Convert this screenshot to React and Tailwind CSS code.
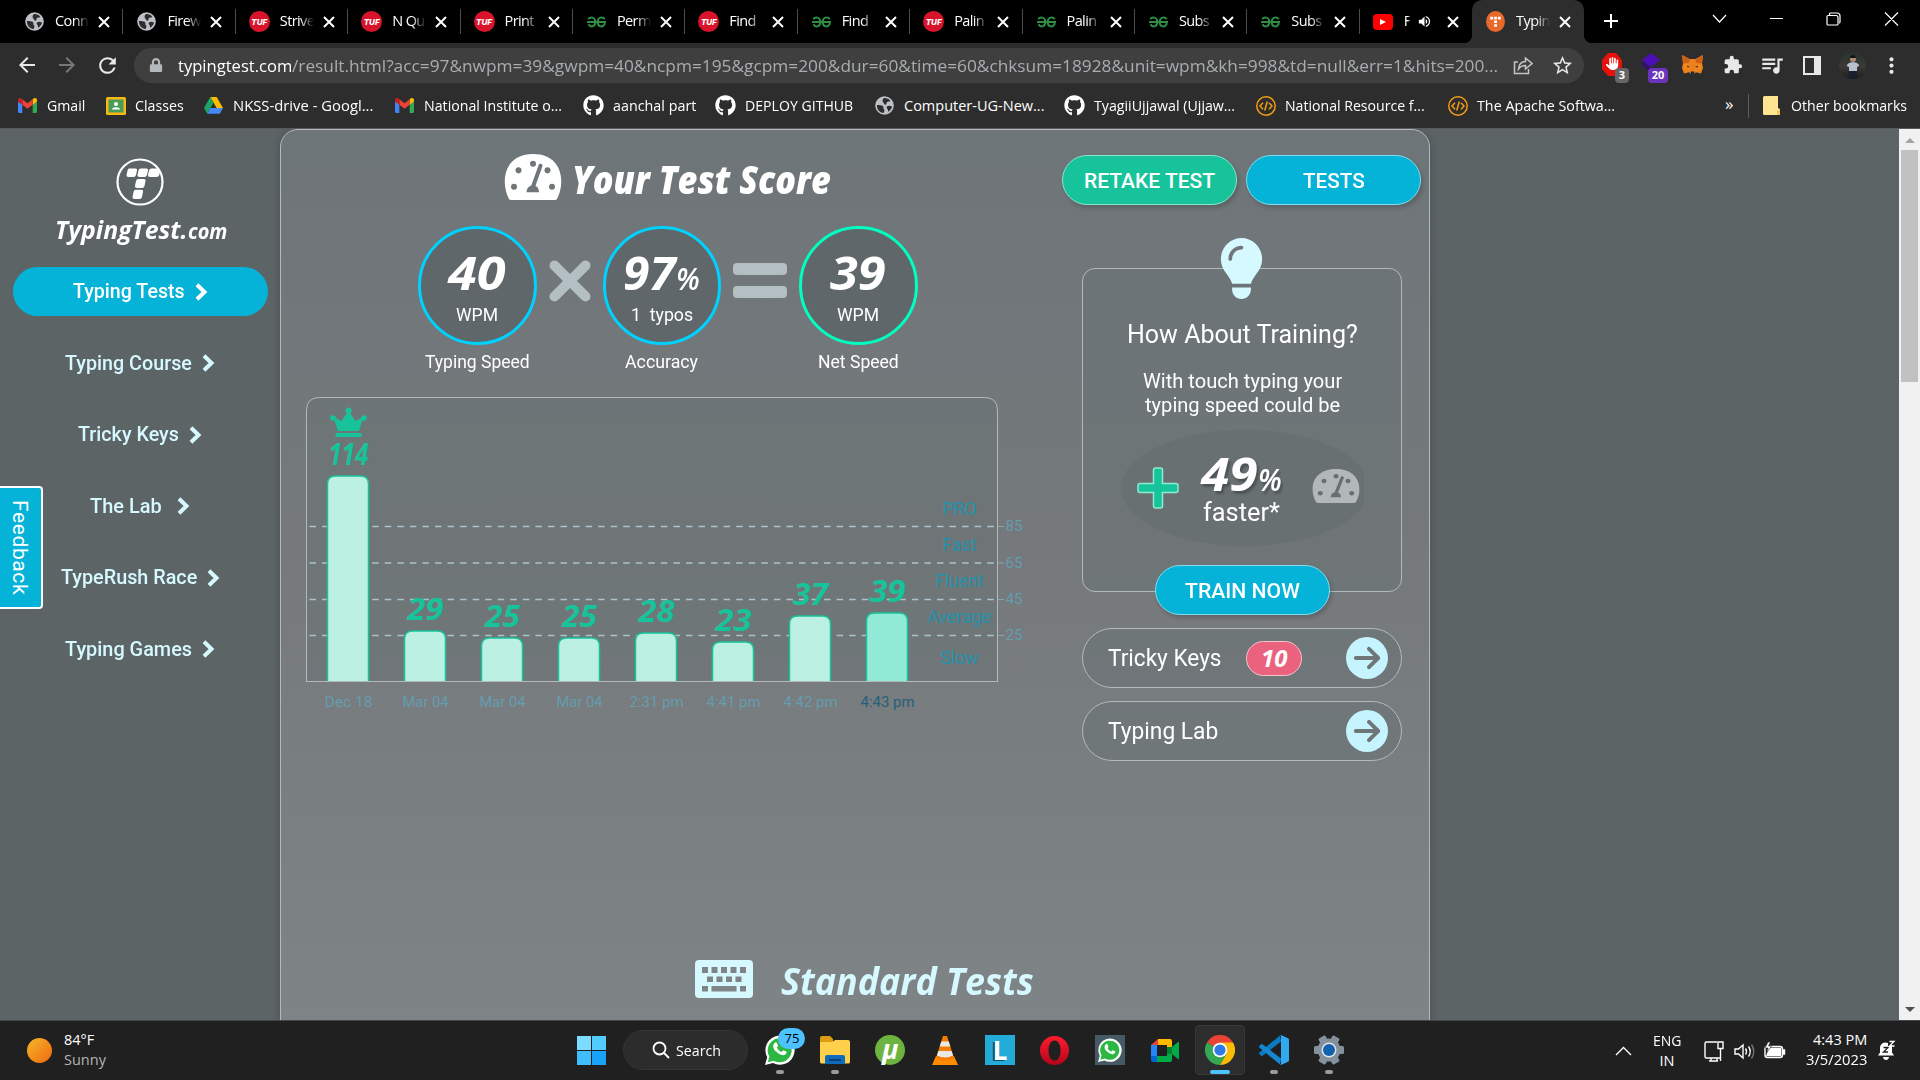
import React, { useLayoutEffect, useRef, useState } from "react";
import { FaGithub, FaLock } from "react-icons/fa";
import { FaLightbulb, FaCircleArrowRight, FaHand } from "react-icons/fa6";
import { MdStarOutline, MdRefresh, MdArrowBack, MdArrowForward, MdOutlineQueueMusic, MdMoreVert, MdVolumeUp, MdAdd } from "react-icons/md";

const ui = "font-['Open_Sans','Noto_Sans',sans-serif]";
const display = "font-['Open_Sans','Noto_Sans',sans-serif] italic";

/* A one-line label that fills exactly `w` pixels. */
function Fit({ w, className = "", children }) {
  const ref = useRef(null);
  const [style, setStyle] = useState({});
  useLayoutEffect(() => {
    setStyle({ transform: `scaleX(${w / ref.current.offsetWidth})` });
  }, [w]);
  return (
    <span className={"inline-block shrink-0 whitespace-nowrap text-left " + className} style={{ width: w }}>
      <span ref={ref} className="inline-block origin-left whitespace-pre" style={style}>{children}</span>
    </span>
  );
}

/* ---------- small brand drawings ---------- */
const Globe = () => (
  <svg width="19" height="19" viewBox="0 0 18 18">
    <circle cx="9" cy="9" r="8.800" fill="#bdc1c6" />
    <path d="M1.800 8.500c2 .2 4.500-.1 5.700 1 1.200 1-.4 1.800.8 2.700 1.200.8.600 2.300-.3 4C4.500 15.800 1.800 13 1.800 8.500zM8.500 2c2.500-.2 4.500.8 6 2.600-1.200 1.200-2 .5-3 1.200-1.200.9.200 2-1.400 2.400C8.500 8.500 8.800 7 7.800 6.200 6.800 5.400 7 3 8.500 2zM11.500 9.800c1.500-.9 3.300-.6 4.600.2-.4 2.200-1.700 4-3.700 5-.2-1.200.2-1.700-.5-2.500-.7-.7-1.300-2-.4-2.700z" fill="#2d2d2d" />
  </svg>
);
const Tuf = () => (
  <span className="flex h-[21px] w-[21px] items-center justify-center rounded-full bg-[#d8142c] font-['Inter',sans-serif] text-[8px] font-extrabold italic text-white">TUF</span>
);
const Gfg = () => (
  <svg width="19" height="12" viewBox="0 0 19 12" fill="none" stroke="#2f8d46" strokeWidth="1.900">
    <path d="M1.200 3.200C3 .6 8.300.600 8.300 6S3.200 11.500 1.400 8.200M0 6h19M17.800 3.200C16 .6 10.700.600 10.700 6s5.100 5.500 6.900 2.200V6" />
  </svg>
);
const Yt = () => <span className="flex h-4 w-5 items-center justify-center rounded bg-[#ff0000]"><span className="h-0 w-0 border-y-[3px] border-l-[6px] border-y-transparent border-l-white" /></span>;
const TtIcon = () => (
  <svg width="19" height="21" viewBox="0 0 18 20">
    <ellipse cx="9" cy="10" rx="9" ry="10" fill="#e8692c" />
    <path d="M4 5.500h2.700v2.500H4zM7.700 5.500h2.700v2.500H7.700zM11.300 5.500H14v2.500h-2.700zM7.700 9h2.700v2.500H7.700zM7.700 12.500h2.700V15H7.700z" fill="#fff" />
  </svg>
);
const Gmail = () => (
  <svg width="19" height="15" viewBox="0 0 19 15">
    <path d="M0 3v10.500C0 14.300.6 15 1.400 15H4.300V6.500z" fill="#4285f4" />
    <path d="M19 3v10.500c0 .8-.6 1.500-1.400 1.500h-2.900V6.500z" fill="#34a853" />
    <path d="M14.700 1.300v5.500L19 3.600V2.100C19 .2 17-.6 15.600.5z" fill="#fbbc04" />
    <path d="M4.300 6.800V1.300l5.200 4 5.200-4v5.500l-5.200 4z" fill="#ea4335" />
    <path d="M0 2.100v1.500l4.300 3.200V1.300L3.400.5C2-.6 0 .2 0 2.100z" fill="#c5221f" />
  </svg>
);
const Classroom = () => (
  <svg width="20" height="18" viewBox="0 0 20 18">
    <rect width="20" height="18" rx="1.500" fill="#f6b913" /><rect x="2.500" y="2.500" width="15" height="13" fill="#4a9c58" />
    <circle cx="10" cy="7" r="2" fill="#fff" /><path d="M6 12.500c0-3 8-3 8 0z" fill="#fff" />
  </svg>
);
const Drive = () => (
  <svg width="19" height="17" viewBox="0 0 19 17">
    <path d="M6.300 0h6.400L19 11h-6.400z" fill="#fbbc04" /><path d="M6.300 0 0 11l3.200 5.700L9.500 5.500z" fill="#1ea362" /><path d="M6.300 11H19l-3.200 5.700H3.200z" fill="#4688f4" />
  </svg>
);
const Hub = () => <FaGithub size={21} color="#fff" />;
const CodeIcon = () => (
  <svg width="20" height="20" viewBox="0 0 20 20" fill="none" stroke="#f29d12" strokeWidth="1.500">
    <circle cx="10" cy="10" r="9.200" /><path d="M7 6.800L4 10l3 3.200M13 6.800l3 3.200-3 3.200M11.300 5.500L8.700 14.500" />
  </svg>
);

const tabs = [
  [Globe, "Conn"], [Globe, "Firew"], [Tuf, "Strive"], [Tuf, "N Qu"], [Tuf, "Print"], [Gfg, "Perm"], [Tuf, "Find"],
  [Gfg, "Find"], [Tuf, "Palin"], [Gfg, "Palin"], [Gfg, "Subs"], [Gfg, "Subs"], [Yt, "F"], [TtIcon, "Typin"],
];

function TabStrip() {
  return (
    <div className={"flex h-[43px] bg-black pl-[11px] text-[14.500px] text-white " + ui}>
      {tabs.map(([Icon, label], i) => {
        const active = i === 13;
        return (
          <div key={i} className={"relative flex h-[43px] w-[112.400px] shrink-0 items-center pl-[13px] " + (active ? "rounded-t-[10px] bg-[#2d2d2d]" : "")}>
            {!active && i !== 12 && <span className="absolute right-0 top-[9px] h-[25px] w-px bg-[#4d4d4d]" />}
            {active && <>
              <span className="absolute -left-2 bottom-0 h-2 w-2 bg-[radial-gradient(circle_at_0_0,#000_8px,#2d2d2d_8px)]" />
              <span className="absolute -right-2 bottom-0 h-2 w-2 bg-[radial-gradient(circle_at_100%_0,#000_8px,#2d2d2d_8px)]" />
            </>}
            <span className="flex w-[21px] justify-center"><Icon /></span>
            <span className={"ml-[10px] -mt-0.5 overflow-hidden whitespace-nowrap tracking-[-0.600px] [mask-image:linear-gradient(90deg,#000_55%,transparent_95%)] " + (i === 12 ? "w-[7px]" : "w-[36px]")}>{label}</span>
            {i === 12 && <MdVolumeUp size={15} className="ml-[6px] mr-2" />}
            <svg className="ml-[7px]" width="12" height="12" viewBox="0 0 12 12" stroke="#fff" strokeWidth="2"><path d="M1 1l10 10M11 1L1 11" /></svg>
          </div>
        );
      })}
      <MdAdd size={24} className="ml-[15px] mt-[9px]" />
      <div className="ml-[89px] flex items-start pt-[11px]">
        <svg width="190" height="16" viewBox="0 0 190 16" fill="none" stroke="#fff" strokeWidth="1.200">
          <path d="M1 4l6.500 7L14 4M58 7.500h13M116 4.500h8a2 2 0 0 1 2 2V13a1 1 0 0 1-1 1h-9a1 1 0 0 1-1-1V5.500a1 1 0 0 1 1-1zM117.500 4.500V3a1 1 0 0 1 1-1h6.500a3 3 0 0 1 3 3v6a1 1 0 0 1-1 1M173 1.500l13 13M186 1.500l-13 13" />
        </svg>
      </div>
    </div>
  );
}

function Toolbar() {
  return (
    <div className={"flex h-[44px] items-center bg-[#2d2d2d] text-[#e8e8e8] " + ui}>
      <MdArrowBack size={24} className="ml-[15px]" />
      <MdArrowForward size={24} className="ml-4 text-[#777]" />
      <MdRefresh size={25} className="ml-4" />
      <div className="ml-[14px] flex h-[35px] w-[1450px] items-center rounded-full bg-[#3f3f3f] text-[17px]">
        <FaLock size={14} className="ml-[15px] mr-[1px] text-[#b5b8bb]" />
        <Fit w={114} className="ml-[14px] pt-px text-white">typingtest.com</Fit>
        <Fit w={1206} className="pt-px text-[#aaadb0]">/result.html?acc=97&amp;nwpm=39&amp;gwpm=40&amp;ncpm=195&amp;gcpm=200&amp;dur=60&amp;time=60&amp;chksum=18928&amp;unit=wpm&amp;kh=998&amp;td=null&amp;err=1&amp;hits=200...</Fit>
        <svg className="ml-[15px]" width="20" height="20" viewBox="0 0 20 20" fill="none" stroke="#c5c5c5" strokeWidth="1.500">
          <path d="M5 7H1.500v11.500h14V14M5.500 14C6 9 9 6.500 12.500 6.500V3l6.500 5.500-6.500 5.500v-3.500c-3 0-5 .8-7 3.500z" />
        </svg>
        <MdStarOutline size={23} className="ml-[18px]" />
      </div>
      <div className="relative ml-[18px] flex h-6 w-[27px]">
        <svg width="20" height="23" viewBox="0 0 20 20" preserveAspectRatio="none"><path d="M6 0h8l6 6v8l-6 6H6l-6-6V6z" fill="#e8100c" /></svg>
        <FaHand size={13} className="absolute left-[4px] top-[4px] text-white" />
        <span className="absolute left-[13px] top-[15px] flex h-[15px] w-[14px] items-center justify-center rounded-sm bg-[#666] text-[11px] font-bold text-white">3</span>
      </div>
      <div className="relative ml-[12px] flex h-6 w-[28px]">
        <svg width="20" height="20" viewBox="0 0 20 20"><path d="M10 0l9 7-9 7-9-7z" fill="#4b0fb5" /><path d="M0 11l3-2 7 6v5z" fill="#341075" /></svg>
        <span className="absolute left-[7px] top-[15px] flex h-[15px] w-[20px] items-center justify-center rounded-sm bg-[#6b34bd] text-[11px] font-bold text-white">20</span>
      </div>
      <svg className="ml-[13px]" width="21" height="20" viewBox="0 0 21 20">
        <path d="M0 0l7.500 4h6L21 0l-1 8 1 5-2 5.500-5-1.200L12 19H9l-2-1.700-5 1.200L0 13l1-5z" fill="#e8821e" />
        <path d="M1 8h6l1.500 9L2 13zM20 8h-6l-1.500 9 6.500-4z" fill="#f6851b" /><path d="M5 10.500l3 1.500-2.500.5zM16 10.500L13 12l2.500.5zM8.500 16.500h4L12 19H9z" fill="#222b38" />
        <path d="M0 0l7.500 4-.5 4-6 .5zM21 0l-7.500 4 .5 4 6 .5z" fill="#cd6116" />
      </svg>
      <svg className="ml-[20px]" width="20" height="20" viewBox="0 0 24 24" fill="#e8e8e8">
        <path d="M20.500 11H19V7c0-1.100-.9-2-2-2h-4V3.500a2.500 2.500 0 0 0-5 0V5H4c-1.100 0-2 .9-2 2v3.800h1.500a2.700 2.700 0 0 1 0 5.400H2V20c0 1.100.9 2 2 2h3.800v-1.500a2.700 2.700 0 0 1 5.400 0V22H17c1.100 0 2-.9 2-2v-4h1.500a2.500 2.500 0 0 0 0-5z" />
      </svg>
      <MdOutlineQueueMusic size={26} className="ml-[16px]" />
      <span className="ml-[18px] h-[19px] w-[18px] border-2 border-r-[7px] border-[#e8e8e8]" />
      <span className="ml-[18px] flex h-[27px] w-[27px] items-end justify-center overflow-hidden rounded-full bg-[linear-gradient(#28332a,#3b3a38_55%,#1d1b1b)]">
        <svg width="18" height="25" viewBox="0 0 18 25"><circle cx="9" cy="5" r="3" fill="#b08a74" /><path d="M6 4a3 3 0 0 1 6 0z" fill="#151515" /><path d="M3 12c0-5 12-5 12 0l-2 1v4H5v-4z" fill="#b9c2cc" /><path d="M5 17h8l1 8H4z" fill="#17202e" /></svg>
      </span>
      <MdMoreVert size={25} className="ml-[13px]" />
    </div>
  );
}

const bookmarks = [
  [Gmail, "Gmail", 38, 88], [Classroom, "Classes", 49, 98], [Drive, "NKSS-drive - Googl...", 140, 191],
  [Gmail, "National Institute o...", 138, 189], [Hub, "aanchal part", 83, 132], [Hub, "DEPLOY GITHUB", 108, 159],
  [Globe, "Computer-UG-New...", 140, 190], [Hub, "TyagiiUjjawal (Ujjaw...", 141, 191], [CodeIcon, "National Resource f...", 140, 192],
  [CodeIcon, "The Apache Softwa...", 138, 278],
];
function Bookmarks() {
  return (
    <div className={"flex h-[42px] items-center border-b border-[#5a5a5c] bg-[#2d2d2d] pb-[4px] pl-[17px] text-[14.500px] text-white " + ui}>
      {bookmarks.map(([Icon, label, w, pitch], i) => (
        <div key={i} className="flex shrink-0 items-center" style={{ width: pitch }}>
          <span className="mr-[9px] flex w-[21px] justify-center"><Icon /></span>
          <Fit w={w}>{label}</Fit>
        </div>
      ))}
      <span className="w-[20px] pb-1 text-[17px]">»</span>
      <span className="ml-[3px] h-6 w-px bg-[#5c5c5c]" />
      <svg className="ml-[14px] mr-[11px]" width="17" height="19" viewBox="0 0 17 19"><path d="M0 1.500Q0 0 1.500 0H15v12l2 1v6H1.500Q0 19 0 17.500z" fill="#ffe591" /><path d="M14 19v-4l3-2v6z" fill="#f0c85a" /></svg>
      <Fit w={116}>Other bookmarks</Fit>
    </div>
  );
}

/* ---------- site drawings ---------- */
const Gauge = ({ w, h, color }) => (
  <svg width={w} height={h} viewBox="0 0 58 45" preserveAspectRatio="none" className="shrink-0">
    <mask id={"g" + w}>
      <rect width="58" height="45" fill="#fff" />
      {[[10, 32], [14.500, 16], [29, 9.500], [43.500, 16], [48, 32]].map(([x, y]) => <circle key={x} cx={x} cy={y} r="3" />)}
      <path d="M36.500 11.500L29 32" stroke="#000" strokeWidth="4" strokeLinecap="round" />
      <path d="M22.500 37.500c0-4 3-7 6.500-7s6 3 6 7z" />
    </mask>
    <path mask={`url(#g${w})`} d="M5 44C-4 27 0 0 29 0s33 27 24 44q-.5 1-2 1H7q-1.500 0-2-1z" fill={color} />
  </svg>
);

const navItems = [
  ["Typing Tests", 112, 10], ["Typing Course", 127, 10], ["Tricky Keys", 101, 10],
  ["The Lab", 72, 15], ["TypeRush Race", 136, 10], ["Typing Games", 127, 10],
];
const Chevron = ({ ml }) => (
  <svg width="13" height="18" viewBox="0 0 13 18" fill="none" stroke="currentColor" strokeWidth="4" style={{ marginLeft: ml }}><path d="M2 1.800l7.500 7.200L2 16.200" /></svg>
);
function Sidebar() {
  return (
    <aside className="relative flex w-[280px] shrink-0 flex-col items-center pt-[29px]">
      <svg width="48" height="48" viewBox="0 0 48 48" className="-ml-px">
        <circle cx="24" cy="24" r="22.500" fill="none" stroke="#fff" strokeWidth="2.200" />
        <g fill="#fff">
          <path d="M13 10.500h6.500q2 0 1.500 2l-1 4.500q-.5 2-2.500 2h-5q-2.300 0-2-2l1-4.500q.4-2 1.500-2zM24.500 10.500h6q2 0 1.500 2l-1 4.500q-.5 2-2.500 2h-5q-2.300 0-2-2l1-4.500q.4-2 2-2zM35.500 10.500h6q2 1.500 2.300 3.500 0 5-3.500 5H34q-2.300 0-2-2l1-4.500q.4-2 2.500-2zM22.500 21h5q2.500 0 2 2l-1 5q-.5 2-2.500 2h-5q-2.300 0-2-2l1-5q.4-2 2.500-2zM20 31.800h5q2.500 0 2 2L26 39q-.5 2-2.500 2h-5q-2.300 0-2-2l1-5q.4-2.200 2.500-2.200z" />
        </g>
      </svg>
      <div className={"mt-[3px] flex h-[42px] items-center pl-px font-bold text-white " + display}>
        <Fit w={133} className="text-[25px]">TypingTest.</Fit>
        <Fit w={39} className="mt-1 text-[21px]">com</Fit>
      </div>
      <nav className="mt-[16px] flex flex-col gap-[23px] font-['Roboto',sans-serif] text-[20.500px] font-medium">
        {navItems.map(([label, w, ml], i) => (
          <div key={label} className={"flex h-[48.500px] w-[255px] items-center justify-center rounded-full pt-px " + (i === 0 ? "bg-[#05b3d9] text-white" : "text-[#d6f8ff]")}>
            <Fit w={w}>{label}</Fit><Chevron ml={ml} />
          </div>
        ))}
      </nav>
      <div className="absolute left-0 top-[357px] flex h-[123px] w-[43px] items-center justify-center rounded-r border-2 border-l-0 border-white bg-[#05b3d9] font-['Roboto',sans-serif] text-[21px] text-white">
        <span className="pr-0.5 leading-none tracking-[0.600px] [writing-mode:vertical-rl]">Feedback</span>
      </div>
    </aside>
  );
}

function Score({ ring, value, vw, pct, unit, uw, label, lw }) {
  return (
    <div className="flex w-[118.500px] flex-col items-center font-['Roboto',sans-serif] text-[18px] text-white">
      <div className={"flex h-[119px] w-[118.500px] flex-col items-center rounded-full border-[3px] bg-[#5f676a] pt-[17px] " + ring}>
        <div className={"flex h-[52px] items-baseline text-[46px] font-bold leading-[52px] " + display}>
          <Fit w={vw}>{value}</Fit>
          {pct && <Fit w={24} className="text-[30px] font-semibold">%</Fit>}
        </div>
        <Fit w={uw} className="mt-[5px] leading-[24px]">{unit}</Fit>
      </div>
      <Fit w={lw} className="mt-[5px] leading-[24px]">{label}</Fit>
    </div>
  );
}

const bars = [
  [114, 475, "Dec 18", 40, 48], [29, 630, "Mar 04", 36, 46], [25, 637, "Mar 04", 35, 46], [25, 637, "Mar 04", 35, 46],
  [28, 632, "2:31 pm", 36, 54], [23, 641, "4:41 pm", 36, 54], [37, 615, "4:42 pm", 35, 54], [39, 612, "4:43 pm", 36, 54],
];
function Chart() {
  return (
    <svg className="ml-[24px] mt-[22px] block" width="725" height="322" viewBox="305 396 725 322">
      <path d="M306.500 682V410.500q0-13 13-13H984.500q13 0 13 13V682" fill="#6b7374" fillOpacity=".6" stroke="#b4b9ba" />
      {[[85, 526.500], [65, 563], [45, 599.500], [25, 635.500]].map(([n, y]) => (
        <g key={n}>
          <path d={`M309.500 ${y}H997`} stroke="#aac3cc" strokeWidth="1.600" strokeDasharray="6.500 6.050" />
          <path d={`M998 ${y}h6`} stroke="#8ba5ae" />
          <text x="1005.500" y={y + 4.500} textLength="17" lengthAdjust="spacingAndGlyphs" className="font-['Roboto',sans-serif] text-[15px]" fill="#659cae">{n}</text>
        </g>
      ))}
      {[["PRO", 515, 34], ["Fast", 551, 34], ["Fluent", 587, 48], ["Average", 623, 64], ["Slow", 664, 38]].map(([t, y, w]) => (
        <text key={t} x={959.500 - w / 2} y={y} textLength={w} lengthAdjust="spacingAndGlyphs" className="font-['Roboto',sans-serif] text-[18px]" fill="#2491ab">{t}</text>
      ))}
      {bars.map(([v, top, date, vw, dw], i) => {
        const x = 327 + i * 77;
        const now = i === 7;
        return (
          <g key={i}>
            <path d={`M${x + 0.500} 682V${top + 9}q0-8 8-8h25q8 0 8 8V682`} fill={now ? "#90ead6" : "#bbf0e3"} stroke="#17c39a" strokeWidth="1.500" />
            <text x={x + 21.500 - vw / 2} y={top - 10} textLength={vw} lengthAdjust="spacingAndGlyphs" className="font-['Open_Sans',sans-serif] text-[30px] font-bold italic" fill="#17c39a">{v}</text>
            <text x={x + 21.500 - dw / 2} y="707" textLength={dw} lengthAdjust="spacingAndGlyphs" className="font-['Roboto',sans-serif] text-[15px]" fill={now ? "#24607a" : "#659cae"}>{date}</text>
          </g>
        );
      })}
      <path d="M306 681.500h692" stroke="#b4b9ba" />
      <g fill="#17c39a">
        <circle cx="348.500" cy="410.500" r="3" /><circle cx="333" cy="418" r="2.800" /><circle cx="364" cy="418" r="2.800" />
        <path d="M348.500 411l7 10 8-4-4.500 14h-21L333.500 417l8 4z" /><rect x="335.500" y="433" width="26" height="4" rx="1" />
      </g>
    </svg>
  );
}

const pill = "flex h-[50px] w-[175px] items-center justify-center rounded-full border font-['Roboto',sans-serif] text-[21px] font-medium text-white shadow-[2px_3px_4px_rgba(0,0,0,0.180)] ";

function TrainRow({ label, w, badge }) {
  return (
    <div className="flex h-[60px] w-[320px] items-center rounded-full border border-[#b4b9ba] bg-[#6b7374]/60 pl-[25px] pr-[13px] font-['Roboto',sans-serif] text-[24px] text-white">
      <Fit w={w}>{label}</Fit>
      {badge && <span className={"ml-[24px] flex h-[35px] w-[56px] items-center justify-center rounded-full border border-[#f2c4ce] bg-[#ea627e] text-[24px] font-bold " + display}><Fit w={26}>{badge}</Fit></span>}
      <FaCircleArrowRight size={42} className="ml-auto text-[#c5f4ff]" />
    </div>
  );
}

function RightColumn() {
  return (
    <div className="flex w-[366px] flex-col pt-[25px]">
      <div className="flex gap-[9px]">
        <div className={pill + "border-[#8be4cf] bg-[#17c39a]"}><Fit w={131} className="pt-[3px]">RETAKE TEST</Fit></div>
        <div className={pill + "border-[#82dcee] bg-[#05b3d9]"}><Fit w={62} className="pt-[3px]">TESTS</Fit></div>
      </div>
      <div className="ml-[20px] mt-[63px] flex h-[324px] w-[320px] flex-col items-center rounded-[13px] border border-[#b4b9ba] bg-[#6b7374]/60 font-['Roboto',sans-serif] text-white">
        <FaLightbulb size={61} preserveAspectRatio="none" className="-ml-0.5 -mt-[31px] h-[61px] w-[45px] shrink-0 text-[#d6f8ff]" />
        <Fit w={231} className="mt-[20px] text-[26px] leading-[30px]">How About Training?</Fit>
        <Fit w={199} className="mt-[20px] text-[20px] leading-[24px]">With touch typing your</Fit>
        <Fit w={195} className="text-[20px] leading-[24px]">typing speed could be</Fit>
        <div className="mt-[13px] h-[116px] w-[243px] shrink-0 overflow-hidden">
          <div className="flex h-[116px] w-[248px] items-center rounded-[50%] bg-[#687072]">
            <svg className="ml-[16px]" width="42" height="42" viewBox="0 0 42 42"><path d="M18.500 1h5q2 0 2 2v13.500H39q2 0 2 2v5q0 2-2 2H25.500V39q0 2-2 2h-5q-2 0-2-2V25.500H3q-2 0-2-2v-5q0-2 2-2h13.500V3q0-2 2-2z" fill="#17c39a" stroke="#8cecd2" strokeWidth="1.500" /></svg>
            <div className="ml-[22px] flex w-[82px] flex-col items-center">
              <div className={"flex items-baseline text-[46px] font-bold leading-[44px] [text-shadow:2px_3px_2px_rgba(0,0,0,0.250)] " + display}>
                <Fit w={57}>49</Fit><Fit w={24} className="text-[30px] font-semibold">%</Fit>
              </div>
              <Fit w={77} className="-mt-[3px] text-[26px] leading-[26px]">faster*</Fit>
            </div>
            <span className="ml-[29px] mt-[-4px]"><Gauge w={48} h={34} color="#b3b7b8" /></span>
          </div>
        </div>
        <div className={pill + "mt-[19px] shrink-0 border-[#82dcee] bg-[#05b3d9]"}><Fit w={115} className="pt-[3px]">TRAIN NOW</Fit></div>
      </div>
      <div className="ml-[20px] mt-[36px] flex flex-col gap-[13px]">
        <TrainRow label="Tricky Keys" w={114} badge="10" />
        <TrainRow label="Typing Lab" w={110} />
      </div>
    </div>
  );
}

function Page() {
  return (
    <div className="flex h-[891px] overflow-hidden bg-[#5c6466]">
      <Sidebar />
      <main className="flex h-[920px] w-[1150px] shrink-0 flex-col rounded-t-[18px] border border-[#b4b9ba] bg-[linear-gradient(#6e7578,#75797c_45%,#7f8486)] shadow-[0_0_10px_rgba(0,0,0,0.200)]">
        <div className="flex">
          <div className="w-[781px]">
            <div className="flex h-[70px] items-end pl-[223px]">
              <Gauge w={58} h={46} color="#fff" />
              <Fit w={259} className={"ml-[10px] text-[38.500px] font-extrabold leading-[42px] text-white " + display}>Your Test Score</Fit>
            </div>
            <div className="mt-[26px] flex pl-[137px]">
              <Score ring="border-[#00d2ff]" value="40" vw={58} unit="WPM" uw={42} label="Typing Speed" lw={105} />
              <svg className="ml-[11px] mt-[33px]" width="44" height="44" viewBox="0 0 44 44" stroke="#b3bfc3" strokeWidth="10" strokeLinecap="round"><path d="M6.500 6.500l31 31M37.500 6.500l-31 31" /></svg>
              <div className="ml-[11px]"><Score ring="border-[#00d2ff]" value="97" vw={53} pct unit="1  typos" uw={62} label="Accuracy" lw={73} /></div>
              <div className="ml-[12px] mt-[37px] flex flex-col gap-[11px]">
                <span className="h-[12px] w-[54px] rounded-[4px] bg-[#b3bfc3]" /><span className="h-[12px] w-[54px] rounded-[4px] bg-[#b3bfc3]" />
              </div>
              <div className="ml-[12px]"><Score ring="border-[#00ffc0]" value="39" vw={56} unit="WPM" uw={42} label="Net Speed" lw={81} /></div>
            </div>
            <Chart />
          </div>
          <RightColumn />
        </div>
        <div className="mt-auto flex h-[88px] items-start pl-[414px] text-[#d6f8ff]">
          <svg width="58" height="38" viewBox="0 0 58 38">
            <rect width="58" height="38" rx="4" fill="#d6f8ff" />
            <path d="M7 7h6v6H7zM16.500 7h6v6h-6zM26 7h6v6h-6zM35.500 7h6v6h-6zM45 7h6v6h-6zM12 16.500h6v5.500h-6zM21.500 16.500h6v5.500h-6zM31 16.500h6v5.500h-6zM40.500 16.500h6v5.500h-6zM7 26h6v5.500H7zM16.500 26h25v5.500h-25zM45 26h6v5.500h-6z" fill="#7f8486" />
          </svg>
          <Fit w={253} className={"ml-[28px] mt-[-2px] text-[38px] font-bold leading-[44px] " + display}>Standard Tests</Fit>
        </div>
      </main>
      <div className="ml-auto flex w-[21px] flex-col items-center bg-[#f1f1f1]">
        <span className="mt-[9px] h-0 w-0 border-x-[5px] border-b-[5px] border-x-transparent border-b-[#a3a3a3]" />
        <span className="mt-[7px] h-[232px] w-[17px] bg-[#c1c1c1]" />
        <span className="mb-[8px] mt-auto h-0 w-0 border-x-[5px] border-t-[5px] border-x-transparent border-t-[#505050]" />
      </div>
    </div>
  );
}

/* ---------- taskbar ---------- */
const Wa = ({ boxed }) => (
  <span className={"relative flex h-[30px] w-[30px] items-center justify-center " + (boxed ? "bg-[#455a64]" : "")}>
    <svg width={boxed ? 24 : 30} height={boxed ? 24 : 30} viewBox="0 0 30 30">
      <path d="M0 30l2.200-7.800A14.600 14.600 0 1 1 8 28z" fill="#fff" />
      <path d="M2.800 27.200l1.600-5.700A12 12 0 1 1 8.700 25.700z" fill="#2cb742" />
      <path d="M9.500 8c1-1 2-1 2.500.3l1 2.200c.3.800-1 1.800-1 2.200.8 1.900 2.300 3.300 4.500 4.200.6 0 1.500-1.800 2.200-1.500l2.500 1.200c.8.500.3 2-.6 2.700-3 2.200-7-.2-9.600-2.700S7 11 9.500 8z" fill="#fff" />
    </svg>
    {!boxed && <span className="absolute -right-[10px] -top-[7px] flex h-[21px] w-[27px] items-center justify-center rounded-full bg-[#4cc2ff] text-[13px] text-black">75</span>}
  </span>
);
const taskIcons = [
  <Wa key="wa" />,
  <svg key="f" width="30" height="28" viewBox="0 0 30 28"><path d="M0 2q0-2 2-2h8l3 3v5H0z" fill="#dd9c10" /><path d="M0 6h12l3-2h13q2 0 2 2v20q0 1.500-1.500 1.500h-27Q0 27.500 0 26z" fill="#ffd04c" /><path d="M5 28v-7q0-2 2-2h16q2 0 2 2v7z" fill="#0f6cbd" /><path d="M9 24h12" stroke="#0a3f7a" strokeWidth="2" /></svg>,
  <span key="u" className="flex h-[30px] w-[30px] items-center justify-center rounded-full bg-[#6cb33f] pb-1 font-['Open_Sans',sans-serif] text-[27px] font-bold italic leading-none text-white">µ</span>,
  <svg key="v" width="26" height="29" viewBox="0 0 26 29"><path d="M4 20h18l4 9H0z" fill="#ff8a00" /><path d="M11 0h4l7 22q-9 5-18 0z" fill="#f47d00" /><path d="M9.300 5.500h7.400l1.600 5H7.700zM6.500 15h13l1.600 4.500q-8 4-16.200 0z" fill="#e9e9e9" /></svg>,
  <span key="l" className="flex h-[30px] w-[30px] items-center justify-center bg-[#24acd9] font-['Noto_Sans',sans-serif] text-[26px] font-bold text-white [text-shadow:-2px_1px_0_#15506b]">L</span>,
  <svg key="o" width="29" height="29" viewBox="0 0 29 29"><defs><linearGradient id="op" x2="0" y2="1"><stop stopColor="#ff1b2d" /><stop offset="1" stopColor="#b3061b" /></linearGradient></defs><path fillRule="evenodd" fill="url(#op)" d="M14.500 0a14.500 14.500 0 1 0 0 29 14.500 14.500 0 1 0 0-29zm0 4.500c4 0 6 4.500 6 10s-2 10-6 10-6-4.500-6-10 2-10 6-10z" /></svg>,
  <Wa key="wb" boxed />,
  <svg key="m" width="28" height="23" viewBox="0 0 28 23"><path d="M7 0h12q2 0 2 2v6h-5V6H7z" fill="#ffba00" /><path d="M7 0v6H0z" fill="#ea4335" /><path d="M0 6h6v11H0z" fill="#2684fc" /><path d="M0 17h6v6H2q-2 0-2-2z" fill="#0066da" /><path d="M6 17h10v-2h5v6q0 2-2 2H6z" fill="#00ac47" /><path d="M16 8h5v7h-5z" fill="#00832d" /><path d="M21 8l6-5q1-.5 1 .5v16q0 1-1 .5l-6-5z" fill="#00ac47" /></svg>,
  <svg key="c" width="30" height="30" viewBox="0 0 30 30"><path d="M15 15L2 7.500A15 15 0 0 1 28 7.500z" fill="#ea4335" /><path d="M2 7.500A15 15 0 0 0 15 30l6.500-11.200L15 15z" fill="#34a853" /><path d="M28 7.500H15v7.500l6.500 3.800L15 30A15 15 0 0 0 28 7.500z" fill="#fbbc04" /><circle cx="15" cy="15" r="7.300" fill="#fff" /><circle cx="15" cy="15" r="5.600" fill="#3279e8" /></svg>,
  <svg key="vs" width="30" height="30" viewBox="0 0 30 30"><path d="M22 6.500L3.500 20.700q-.8.500-1.400 0L.4 19q-.7-.8 0-1.500L21 .5z" fill="#0b7bc1" /><path d="M22 23.500L3.500 9.300q-.8-.5-1.400 0L.4 11q-.7.800 0 1.500L21 29.500z" fill="#1487d0" /><path d="M21 0.500q.5-.7 1.500-.3L29 3.200q1 .5 1 1.500v20.600q0 1-1 1.500l-6.500 3q-1 .4-1.500-.3 1 .3 1-1V1.500q0-1.300-1-1z" fill="#32a9ee" /></svg>,
  <svg key="s" width="30" height="30" viewBox="0 0 30 30"><g fill="#84909b"><circle cx="15" cy="15" r="11.500" />{[0, 60, 120, 180, 240, 300].map((a) => <rect key={a} x="11" y="0" width="8" height="8" rx="1.500" transform={`rotate(${a + 30} 15 15)`} />)}</g><circle cx="15" cy="15" r="7.500" fill="#dfe5ea" /><circle cx="15" cy="15" r="6" fill="#1062ad" /></svg>,
];

function Taskbar() {
  return (
    <div className={"flex h-[60px] border-t border-[#434647] bg-[#202020] text-white " + ui}>
      <div className="flex w-[577px] items-center pl-[27px]">
        <span className="h-[25px] w-[25px] rounded-full bg-[linear-gradient(135deg,#f6b92c,#f0660d)]" />
        <div className="ml-[12px] flex flex-col pb-0.5 text-[14.500px] leading-[20px]">
          <Fit w={30}>84°F</Fit>
          <Fit w={42} className="text-[#b4b4b4]">Sunny</Fit>
        </div>
      </div>
      <div className="mt-[15px] grid h-[29px] w-[29px] grid-cols-2 gap-px">
        <span className="bg-[#7bdcff]" /><span className="bg-[#50ccff]" /><span className="bg-[#3fbdfc]" /><span className="bg-[#1aa2f8]" />
      </div>
      <div className="ml-[17px] mt-[9px] flex h-10 w-[125px] items-center rounded-full border border-[#343434] bg-[#2c2c2c] pl-[28px] text-[14.500px]">
        <svg width="18" height="18" viewBox="0 0 18 18" fill="none" stroke="#fff" strokeWidth="1.800"><circle cx="7.500" cy="7.500" r="6" /><path d="M12 12l5 5" /></svg>
        <Fit w={45} className="ml-[6px] pt-px">Search</Fit>
      </div>
      <div className="ml-[5px] flex">
        {taskIcons.map((icon, i) => (
          <div key={i} className="flex w-[54.900px] justify-center">
            <div className={"relative mt-[4px] flex h-[50px] w-[50px] items-center justify-center rounded border " + (i === 8 ? "border-[#383838] bg-[#2d2d2d]" : "border-transparent")}>
              {icon}
              {i === 8 && <span className="absolute bottom-0 h-[4px] w-[20px] rounded-full bg-[#4cc2ff]" />}
              {[0, 1, 9, 10].includes(i) && <span className="absolute bottom-0 h-[4px] w-[8px] rounded-full bg-[#9a9a9a]" />}
            </div>
          </div>
        ))}
      </div>
      <div className="ml-auto flex h-[59px] items-center pr-[24px] text-[14.500px] leading-[20px]">
        <svg width="17" height="10" viewBox="0 0 17 10" fill="none" stroke="#fff" strokeWidth="1.400"><path d="M1 9l7.500-7.500L16 9" /></svg>
        <div className="ml-[20px] flex w-[30px] flex-col items-center"><Fit w={29}>ENG</Fit><Fit w={15}>IN</Fit></div>
        <svg className="ml-[21px]" width="84" height="24" viewBox="0 0 84 24" fill="none" stroke="#fff" strokeWidth="1.400">
          <path d="M14 3H3.500Q2 3 2 4.500v13Q2 19 3.500 19H17M8 19v3M14 19v3M6 22h9M15 3h5v6.500h-5zM17.500 9.500V22" />
          <path d="M32 10h3.500l4.500-4v13l-4.500-4H32zM42.500 9.500q2 3 0 6M45.500 7.500q3.500 5 0 10" /><path d="M48.500 5.500q4.500 7 0 14" stroke="#777" />
          <rect x="62" y="7.500" width="17.500" height="11" rx="2.500" /><path d="M66 9.500h11.500v7H64z" fill="#fff" /><path d="M79.500 11v4h2v-4z" fill="#fff" /><path d="M65 3l-3 6h3l-1.500 5 5-7h-3l2-4z" fill="#fff" stroke="#202020" strokeWidth=".6" />
        </svg>
        <div className="ml-[18px] flex w-[62px] flex-col items-end pb-0.5"><Fit w={54}>4:43 PM</Fit><Fit w={61}>3/5/2023</Fit></div>
        <svg className="ml-[10px]" width="19" height="21" viewBox="0 0 19 21"><path d="M1 15.500l2-3V8a5.500 5.500 0 0 1 8-5v3h4v6.500l2 3zM6 17h6q-.5 3-3 3t-3-3z" fill="#fff" /><path d="M6.500 7.500h4.500L6.500 12H11" fill="none" stroke="#202020" strokeWidth="1.300" /><path d="M12.500 1.500H17L12.500 6H17.500" fill="none" stroke="#fff" strokeWidth="1.300" /></svg>
      </div>
    </div>
  );
}

export default function App() {
  return (
    <div className="flex h-[1080px] w-[1920px] flex-col overflow-hidden bg-black">
      <TabStrip />
      <Toolbar />
      <Bookmarks />
      <Page />
      <Taskbar />
    </div>
  );
}
